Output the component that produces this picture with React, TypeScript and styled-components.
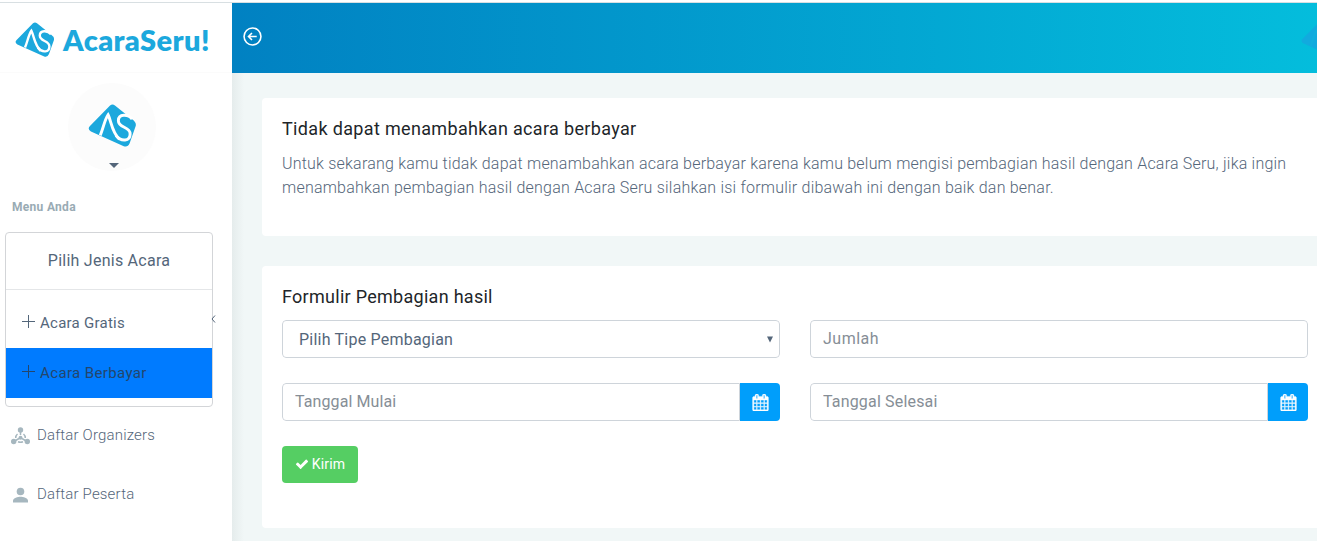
import React from 'react';
import styled, { createGlobalStyle } from 'styled-components';

const Global = createGlobalStyle`
  * { box-sizing: border-box; }
  html, body { height: 100%; overflow: hidden; }
  body { margin: 0; background: #fff; font-family: Roboto, "Liberation Sans", sans-serif; color: #54667a; }
  h4, h6, p { margin: 0; font-weight: 400; }
  input, select, button { font-family: inherit; }
`;

const Page = styled.div`
  width: 1317px;
  height: 541px;
  overflow: hidden;
  border-top: 1px solid #d8dfe2;
  margin-top: 2px;
  display: flex;
`;
const Sidebar = styled.aside`
  width: 232px;
  flex: none;
  background: #fff;
  display: flex;
  flex-direction: column;
`;
const Brand = styled.div`
  height: 70px;
  padding: 17px 0 0 15px;
  display: flex;
  gap: 8px;
  border-bottom: 1px solid #fbfbfb;
  svg { margin-top: 2px; }
`;
const Wordmark = styled.span`
  color: #1ca8dd;
  font: 800 29px/40px Lato, sans-serif;
  letter-spacing: 0.4px;
`;
const Profile = styled.div`
  height: 116px;
  padding-top: 10px;
  display: flex;
  flex-direction: column;
  align-items: center;
  padding-right: 8px;
`;
const Avatar = styled.div`
  width: 88px;
  height: 88px;
  border-radius: 50%;
  background: #fcfcfc;
  display: flex;
  align-items: center;
  justify-content: center;
  padding-bottom: 2px;
`;
const Caret = styled.span`
  margin: -8px 0 0 4px;
  border: 5px solid transparent;
  border-top-color: #54667a;
  border-bottom: 0;
`;
const MenuTitle = styled.h6`
  padding-left: 12px;
  height: 43px;
  font-size: 12px;
  line-height: 36px;
  font-weight: 700;
  letter-spacing: 0.3px;
  color: #99abb4;
`;
const Picker = styled.div`
  position: relative;
  margin-left: 5px;
  width: 208px;
  height: 175px;
  border: 1px solid #d3d5d8;
  border-radius: 4px;
`;
const PickerTitle = styled.div`
  height: 57px;
  border-bottom: 1px solid #e4e6e8;
  text-align: center;
  font-size: 16px;
  line-height: 56px;
  letter-spacing: 0.25px;
  margin-bottom: 8px;
`;
const Option = styled.div<{ $active?: boolean }>`
  height: 50px;
  padding-left: 15px;
  display: flex;
  align-items: center;
  gap: 4px;
  font-size: 15px;
  letter-spacing: ${p => (p.$active ? 0.37 : 0.25)}px;
  color: ${p => (p.$active ? '#24466c' : '#54667a')};
  background: ${p => (p.$active ? '#007bff' : 'transparent')};
  svg { margin-bottom: 3px; }
`;
const Chevron = styled.svg`
  position: absolute;
  left: 205px;
  top: 82px;
`;
const NavList = styled.nav`
  margin-top: -2px;
`;
const NavItem = styled.div`
  height: 59px;
  padding-left: 10px;
  display: flex;
  align-items: center;
  gap: 7px;
  font-size: 15px;
  font-weight: 300;
  letter-spacing: 0.17px;
  svg { margin-top: 2px; }
`;
const Main = styled.main`
  flex: 1;
  min-width: 0;
  background: linear-gradient(90deg, #e5ecec, #f1f7f7 12px);
`;
const TopBar = styled.header`
  height: 70px;
  padding: 0 0 3px 11px;
  display: flex;
  align-items: center;
  justify-content: space-between;
  overflow: hidden;
  background: linear-gradient(90deg, #0181c2, #04bddc);
`;
const Account = styled.div`
  width: 16px;
  height: 34px;
  margin-top: 5px;
  overflow: hidden;
  opacity: 0.6;
`;
const Cards = styled.div`
  padding: 25px 0 0 30px;
  display: flex;
  flex-direction: column;
  gap: 30px;
`;
const Card = styled.section<{ $height: number }>`
  height: ${p => p.$height}px;
  padding: 20px 9px 0 20px;
  background: #fff;
  border-radius: 4px 0 0 4px;
`;
const Heading = styled.h4<{ $track: number }>`
  font-size: 18px;
  line-height: 22px;
  color: #212529;
  letter-spacing: ${p => p.$track}px;
`;
const Line = styled.p<{ $track: number }>`
  font-size: 16px;
  line-height: 24px;
  font-weight: 300;
  white-space: nowrap;
  letter-spacing: ${p => p.$track}px;
`;
const Copy = styled.div`
  margin-top: 12px;
`;
const Fields = styled.form`
  margin-top: 12px;
  display: grid;
  grid-template-columns: 498px 498px;
  gap: 25px 30px;
  justify-items: start;
`;
const Control = styled.div`
  width: 100%;
  height: 38px;
  display: flex;
  border-radius: 4px;
  overflow: hidden;
`;
const Field = styled.input<{ $track: number; $joined?: boolean }>`
  flex: 1;
  min-width: 0;
  border: 1px solid #ced4da;
  border-radius: ${p => (p.$joined ? '4px 0 0 4px' : '4px')};
  padding: 0 12px 2px;
  background: #fff;
  font-size: 16px;
  letter-spacing: ${p => p.$track}px;
  &::placeholder { color: #868e96; opacity: 1; }
`;
const Selected = styled.div`
  flex: 1;
  border: 1px solid #ced4da;
  border-radius: 4px;
  padding: 0 5px 0 16px;
  display: flex;
  align-items: center;
  justify-content: space-between;
  font-size: 16px;
  letter-spacing: 0.22px;
`;
const Addon = styled.div`
  width: 40px;
  background: #009efb;
  display: flex;
  align-items: center;
  justify-content: center;
`;
const Submit = styled.button`
  width: 76px;
  height: 37px;
  padding: 0 0 1px;
  border: 0;
  border-radius: 4px;
  background: #55ce63;
  color: #fff;
  font-size: 14px;
  font-weight: 400;
  letter-spacing: 0.2px;
  display: flex;
  align-items: center;
  justify-content: center;
  gap: 3px;
`;

const Mark = ({ width, color = '#1ca8dd', ink = '#fff' }: { width: number; color?: string; ink?: string }) => (
  <svg width={width} height={width * 0.88} viewBox="0 0 50 44">
    <path d="M22.500 1.500 Q25 -0.500 27.500 1.500 L45 15.500 Q50 19 48.500 23 L42.500 40 Q40.500 44.500 36.500 43 L3 28 Q-1 25.500 2 22.500 Z" fill={color} />
    <path d="M12.500 32 C15.500 25 17 16 20.500 11 C24 18 24 28 32 36" fill="none" stroke={ink} strokeWidth="3" />
    <path d="M45 15.500 C41 10 31 10 31 17 C31 25 43 22.500 43 30.500 C43 38 34 39 28.500 32" fill="none" stroke={ink} strokeWidth="3" />
  </svg>
);
const Plus = () => (
  <svg width="15" height="15" viewBox="0 0 15 15" fill="none" stroke="currentColor">
    <path d="M7.500 1v13M1 7.500h13" />
  </svg>
);
const Calendar = () => (
  <svg width="17" height="17" viewBox="0 0 1792 1792" fill="#fff">
    <path d="M192 1664h288v-288h-288v288zm352 0h320v-288h-320v288zm-352-352h288v-320h-288v320zm352 0h320v-320h-320v320zm-352-384h288v-288h-288v288zm736 736h320v-288h-320v288zm-384-736h320v-288h-320v288zm768 736h288v-288h-288v288zm-384-352h320v-320h-320v320zm-352-864v-288q0-13-9.500-22.500t-22.500-9.500h-64q-13 0-22.500 9.500t-9.500 22.500v288q0 13 9.500 22.500t22.500 9.500h64q13 0 22.500-9.500t9.500-22.500zm736 864h288v-320h-288v320zm-384-384h320v-288h-320v288zm384 0h288v-288h-288v288zm32-480v-288q0-13-9.500-22.500t-22.500-9.500h-64q-13 0-22.500 9.500t-9.500 22.500v288q0 13 9.500 22.500t22.500 9.500h64q13 0 22.500-9.500t9.500-22.500zm384-64v1280q0 52-38 90t-90 38h-1408q-52 0-90-38t-38-90v-1280q0-52 38-90t90-38h128v-96q0-66 47-113t113-47h64q66 0 113 47t47 113v96h384v-96q0-66 47-113t113-47h64q66 0 113 47t47 113v96h128q52 0 90 38t38 90z" stroke="#fff" strokeWidth="40" />
  </svg>
);
const Check = () => (
  <svg width="14" height="14" viewBox="0 0 1792 1792" fill="#fff">
    <path d="M1671 566q0 40-28 68l-724 724-136 136q-28 28-68 28t-68-28l-136-136-362-362q-28-28-28-68t28-68l136-136q28-28 68-28t68 28l294 295 656-657q28-28 68-28t68 28l136 136q28 28 28 68z" />
  </svg>
);

export default function App() {
  return (
    <>
      <Global />
      <Page>
        <Sidebar>
          <Brand>
            <Mark width={40} />
            <Wordmark>AcaraSeru!</Wordmark>
          </Brand>
          <Profile>
            <Avatar><Mark width={49} /></Avatar>
            <Caret />
          </Profile>
          <MenuTitle>Menu Anda</MenuTitle>
          <Picker>
            <PickerTitle>Pilih Jenis Acara</PickerTitle>
            <Option><Plus />Acara Gratis</Option>
            <Option $active><Plus />Acara Berbayar</Option>
            <Chevron width="5" height="8" viewBox="0 0 5 8" fill="none" stroke="#54667a"><path d="M4 0.500 L1 4 L4 7.500" /></Chevron>
          </Picker>
          <NavList>
            <NavItem>
              <svg width="20" height="20" viewBox="0 0 20 20" fill="#a6b7bf">
                <circle cx="10.500" cy="4" r="2.700" /><circle cx="3.700" cy="15.500" r="2.700" /><circle cx="17.300" cy="15.500" r="2.700" />
                <path d="M10.500 5v4M9 12.500L4 15.500M12 12.500L17 15.500" stroke="#a6b7bf" strokeWidth="1.500" />
                <circle cx="10.500" cy="11.700" r="2" />
                <path d="M7.500 8Q5.700 9.500 5.700 12M13.500 8Q15.300 9.500 15.300 12M8 15.700Q10.500 16.700 13 15.700" fill="none" stroke="#a6b7bf" strokeWidth="1.500" />
              </svg>
              Daftar Organizers
            </NavItem>
            <NavItem>
              <svg width="20" height="20" viewBox="0 0 20 20" fill="#a6b7bf">
                <circle cx="10.500" cy="6.500" r="3.800" /><path d="M3 17.500V15.500C3 13 8 11.700 10.500 11.700S18 13 18 15.500V17.500Z" />
              </svg>
              Daftar Peserta
            </NavItem>
          </NavList>
        </Sidebar>
        <Main>
          <TopBar>
            <svg width="19" height="19" viewBox="0 0 18 18" fill="none" stroke="#fff" strokeWidth="1.500">
              <circle cx="9" cy="9" r="8" /><path d="M13 9H5.500M8.500 5.700L5.200 9l3.300 3.300" />
            </svg>
            <Account><Mark width={38} color="#1c9fe0" ink="#1ca5df" /></Account>
          </TopBar>
          <Cards>
            <Card $height={138}>
              <Heading $track={0.34}>Tidak dapat menambahkan acara berbayar</Heading>
              <Copy>
                <Line $track={0.21}>Untuk sekarang kamu tidak dapat menambahkan acara berbayar karena kamu belum mengisi pembagian hasil dengan Acara Seru, jika ingin</Line>
                <Line $track={0.215}>menambahkan pembagian hasil dengan Acara Seru silahkan isi formulir dibawah ini dengan baik dan benar.</Line>
              </Copy>
            </Card>
            <Card $height={262}>
              <Heading $track={0.28}>Formulir Pembagian hasil</Heading>
              <Fields>
                <Control>
                  <Selected>Pilih Tipe Pembagian
                    <svg width="8" height="7" viewBox="0 0 8 7" fill="#54667a"><path d="M1 0.500h6L4 6.500z" /></svg>
                  </Selected>
                </Control>
                <Control><Field $track={0.5} placeholder="Jumlah" /></Control>
                <Control><Field $joined $track={0.1} placeholder="Tanggal Mulai" /><Addon><Calendar /></Addon></Control>
                <Control><Field $joined $track={0.17} placeholder="Tanggal Selesai" /><Addon><Calendar /></Addon></Control>
                <Submit type="button"><Check />Kirim</Submit>
              </Fields>
            </Card>
          </Cards>
        </Main>
      </Page>
    </>
  );
}
